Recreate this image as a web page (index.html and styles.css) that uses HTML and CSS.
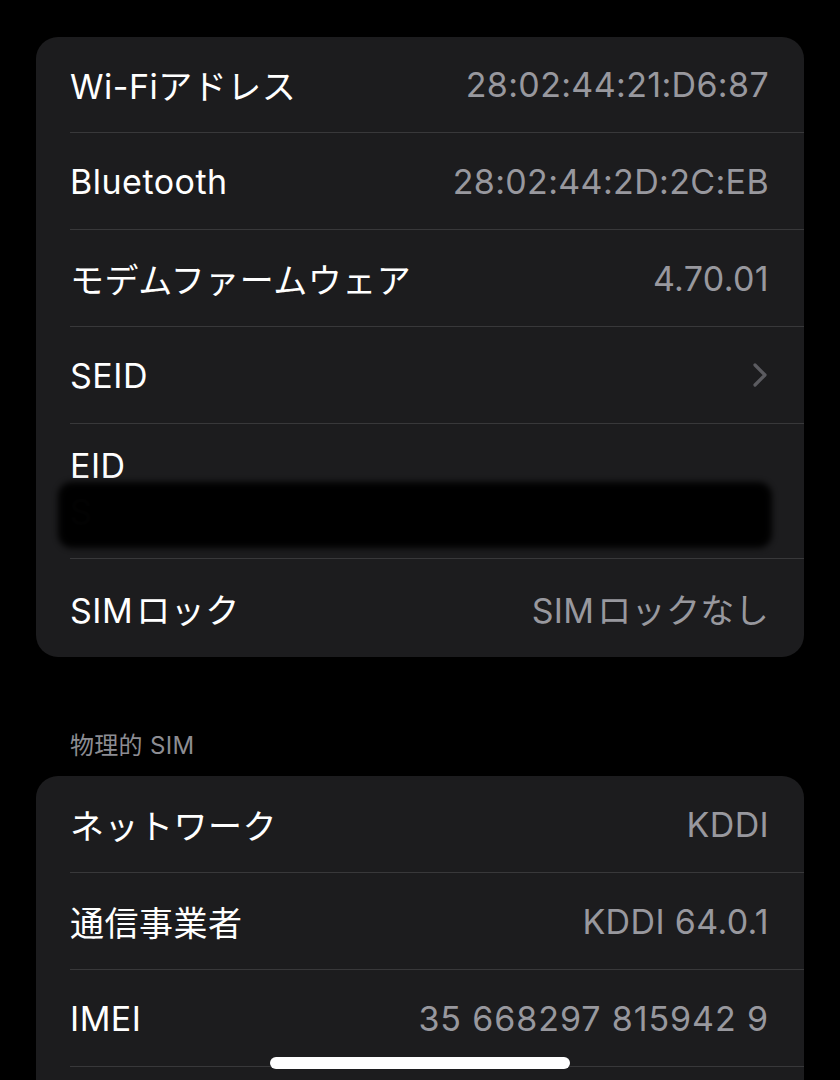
FILE: index.html
```html
<!DOCTYPE html>
<html lang="ja">
<head>
<meta charset="utf-8">
<link rel="stylesheet" href="styles.css">
</head>
<body>
<div class="screen">
  <div class="card card-top">
    <div class="row first"><span class="label">Wi-Fiアドレス</span><span class="value">28:02:44:21:D6:87</span></div>
    <div class="row"><span class="label">Bluetooth</span><span class="value">28:02:44:2D:2C:EB</span></div>
    <div class="row"><span class="label">モデムファームウェア</span><span class="value">4.70.01</span></div>
    <div class="row"><span class="label">SEID</span>
      <svg class="chev" width="16" height="26" viewBox="0 0 16 26"><path d="M3 3 L13 13 L3 23" fill="none" stroke="#5b5b60" stroke-width="3.2" stroke-linecap="round" stroke-linejoin="round"/></svg>
    </div>
    <div class="row row-eid">
      <span class="label">EID</span>
      <span class="eid-value">S</span>
      <div class="redact"></div>
    </div>
    <div class="row last"><span class="label tight">SIM ロック</span><span class="value tight">SIM ロックなし</span></div>
  </div>

  <div class="section-title">物理的 SIM</div>

  <div class="card card-bottom">
    <div class="row first"><span class="label">ネットワーク</span><span class="value">KDDI</span></div>
    <div class="row"><span class="label">通信事業者</span><span class="value">KDDI 64.0.1</span></div>
    <div class="row"><span class="label">IMEI</span><span class="value num">35 668297 815942 9</span></div>
    <div class="row"></div>
  </div>
  <div class="home-indicator"></div>
</div>
</body>
</html>
```
FILE: styles.css
```css
html, body {
  margin: 0;
  padding: 0;
  background: #000;
}
body {
  width: 840px;
  height: 1080px;
  overflow: hidden;
  font-family: Inter, "Noto Sans CJK JP", sans-serif;
  -webkit-font-smoothing: antialiased;
}
.screen {
  position: relative;
  height: 1080px;
  padding: 37px 36px 0 36px;
  box-sizing: border-box;
  overflow: hidden;
}
.card {
  background: #1c1c1e;
  border-radius: 22px;
  padding-left: 34px;
  overflow: hidden;
}
.card-bottom {
  border-radius: 22px 22px 0 0;
}
.row {
  position: relative;
  display: flex;
  align-items: center;
  justify-content: space-between;
  height: 97px;
  padding-right: 35px;
  border-bottom: 1px solid #38383a;
  box-sizing: border-box;
}
.card-top .row.first {
  height: 96px;
}
.card-bottom .row.first {
  height: 97px;
}
.row.last {
  border-bottom: none;
  height: 98px;
}
.label {
  color: #ffffff;
  font-size: 34px;
  letter-spacing: 0.5px;
}
.value {
  color: #98989e;
  font-size: 34px;
  letter-spacing: 0.35px;
}
.value.num {
  letter-spacing: 0.9px;
}
.tight {
  word-spacing: -7px;
}
.chev {
  display: block;
  margin-right: 1px;
}
.row-eid {
  height: 135px;
  flex-direction: column;
  align-items: flex-start;
  justify-content: flex-start;
  padding-top: 25px;
}
.row-eid .label {
  line-height: 34px;
}
.eid-value {
  color: #4a4a4e;
  font-size: 34px;
  margin-top: 12px;
  line-height: 34px;
}
.redact {
  position: absolute;
  left: -12px;
  right: 32px;
  top: 58px;
  height: 66px;
  background: #000;
  border-radius: 14px;
  filter: blur(3px);
  opacity: 0.97;
}
.section-title {
  color: #8d8d93;
  font-size: 24px;
  letter-spacing: 0.3px;
  padding: 74px 0 16px 34px;
  line-height: 29px;
}
.home-indicator {
  position: absolute;
  left: 270px;
  top: 1057px;
  width: 300px;
  height: 12px;
  border-radius: 6px;
  background: #ffffff;
}
```
